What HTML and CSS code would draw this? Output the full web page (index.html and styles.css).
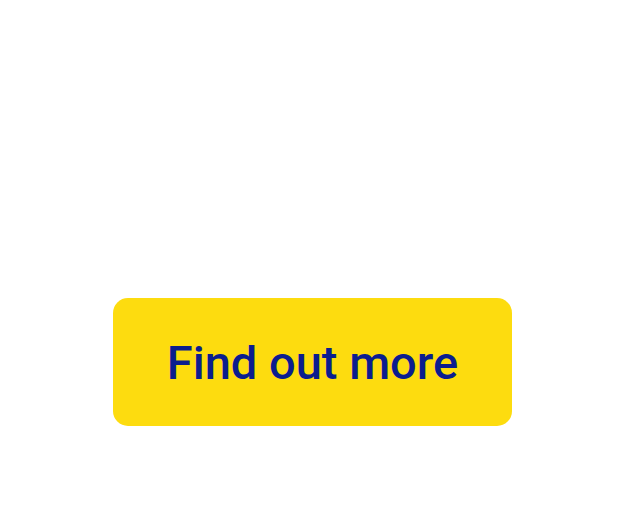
FILE: index.html
```html
<!DOCTYPE html>
<html lang="en">
<head>
<meta charset="utf-8">
<title>Find out more</title>
<link rel="stylesheet" href="styles.css">
</head>
<body>
<main class="page">
  <a class="cta" href="#">Find out more</a>
</main>
</body>
</html>
```
FILE: styles.css
```css
html, body {
  margin: 0;
  padding: 0;
  background: #ffffff;
}
.page {
  display: flex;
  justify-content: center;
  padding-top: 298px;
  width: 625px;
  box-sizing: border-box;
}
.cta {
  display: flex;
  align-items: center;
  justify-content: center;
  width: 399px;
  height: 128px;
  border-radius: 15px;
  background: #fddc0f;
  color: #0b1d8e;
  font-family: Roboto, "Liberation Sans", sans-serif;
  font-weight: 500;
  font-size: 47px;
  text-decoration: none;
  box-sizing: border-box;
}
```
